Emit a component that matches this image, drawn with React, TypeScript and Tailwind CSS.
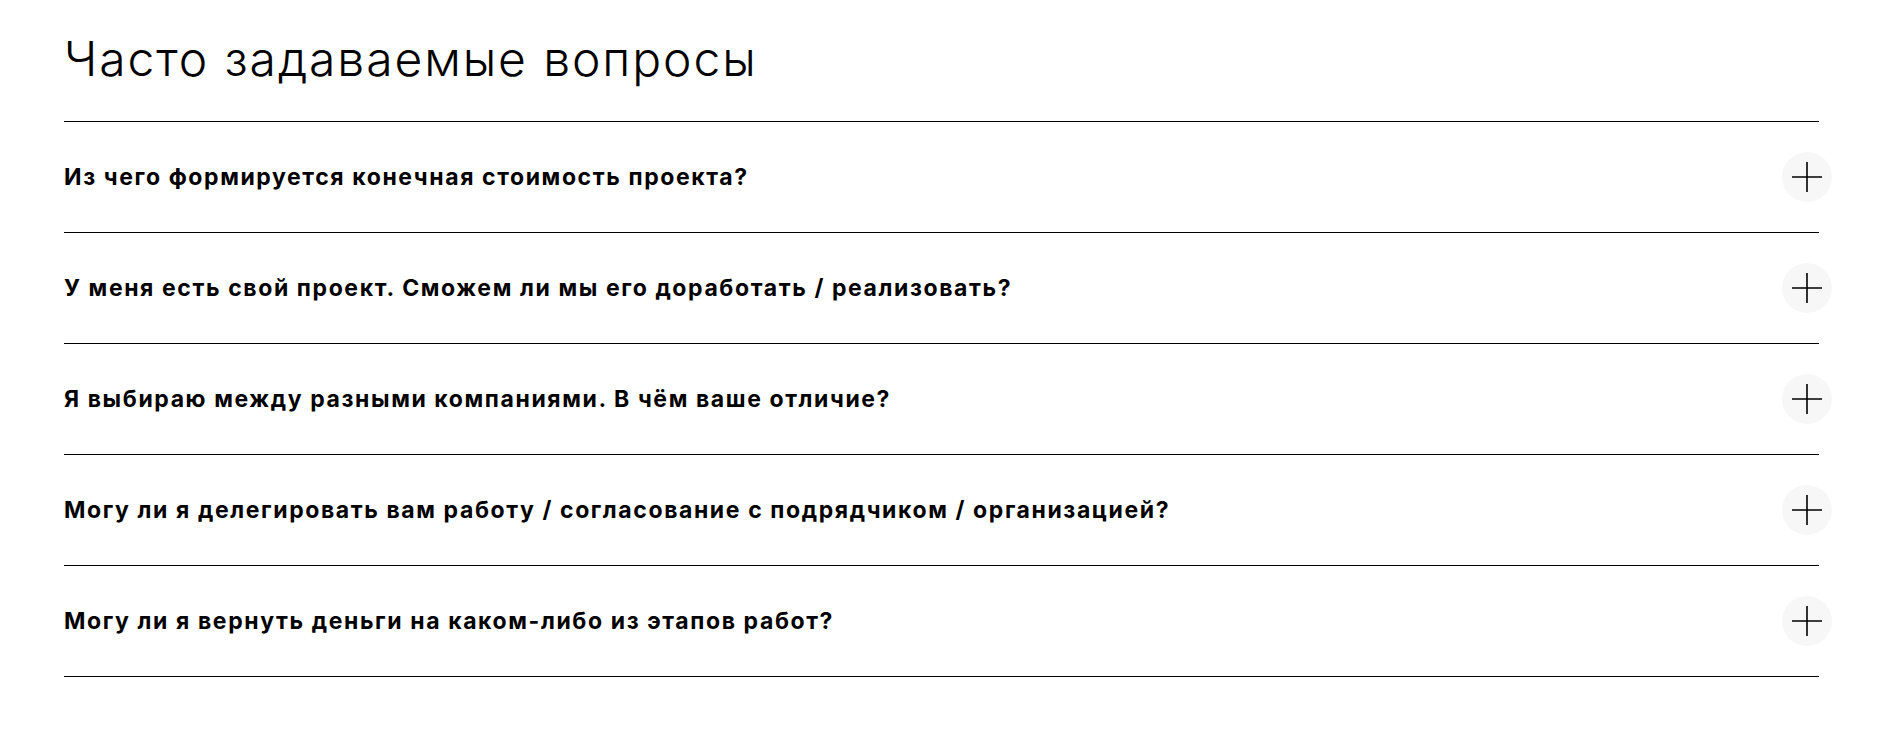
const questions = [
  "Из чего формируется конечная стоимость проекта?",
  "У меня есть свой проект. Сможем ли мы его доработать / реализовать?",
  "Я выбираю между разными компаниями. В чём ваше отличие?",
  "Могу ли я делегировать вам работу / согласование с подрядчиком / организацией?",
  "Могу ли я вернуть деньги на каком-либо из этапов работ?",
];

function PlusIcon() {
  return (
    <svg width="30" height="30" viewBox="0 0 30 30" fill="none">
      <path d="M15 0v30M0 15h30" stroke="#000" strokeWidth="1.6" />
    </svg>
  );
}

export default function App() {
  return (
    <div className="min-h-[755px] bg-white text-black font-['Inter',sans-serif]">
      <div className="ml-[64px] w-[1755px] pt-[30px]">
        <h2 className="text-[48px] font-light leading-[58px] tracking-[1.9px] pb-[33px]">Часто задаваемые вопросы</h2>

        <div className="border-b border-black">
          {questions.map(q => (
            <div key={q} className="flex items-center justify-between h-[111px] border-t border-black">
              <span className="text-[23px] font-bold tracking-[1.6px]">{q}</span>
              <button className="w-[50px] h-[50px] mr-[-13px] rounded-full bg-[#f7f7f7] flex items-center justify-center">
                <PlusIcon />
              </button>
            </div>
          ))}
        </div>
      </div>
    </div>
  );
}
